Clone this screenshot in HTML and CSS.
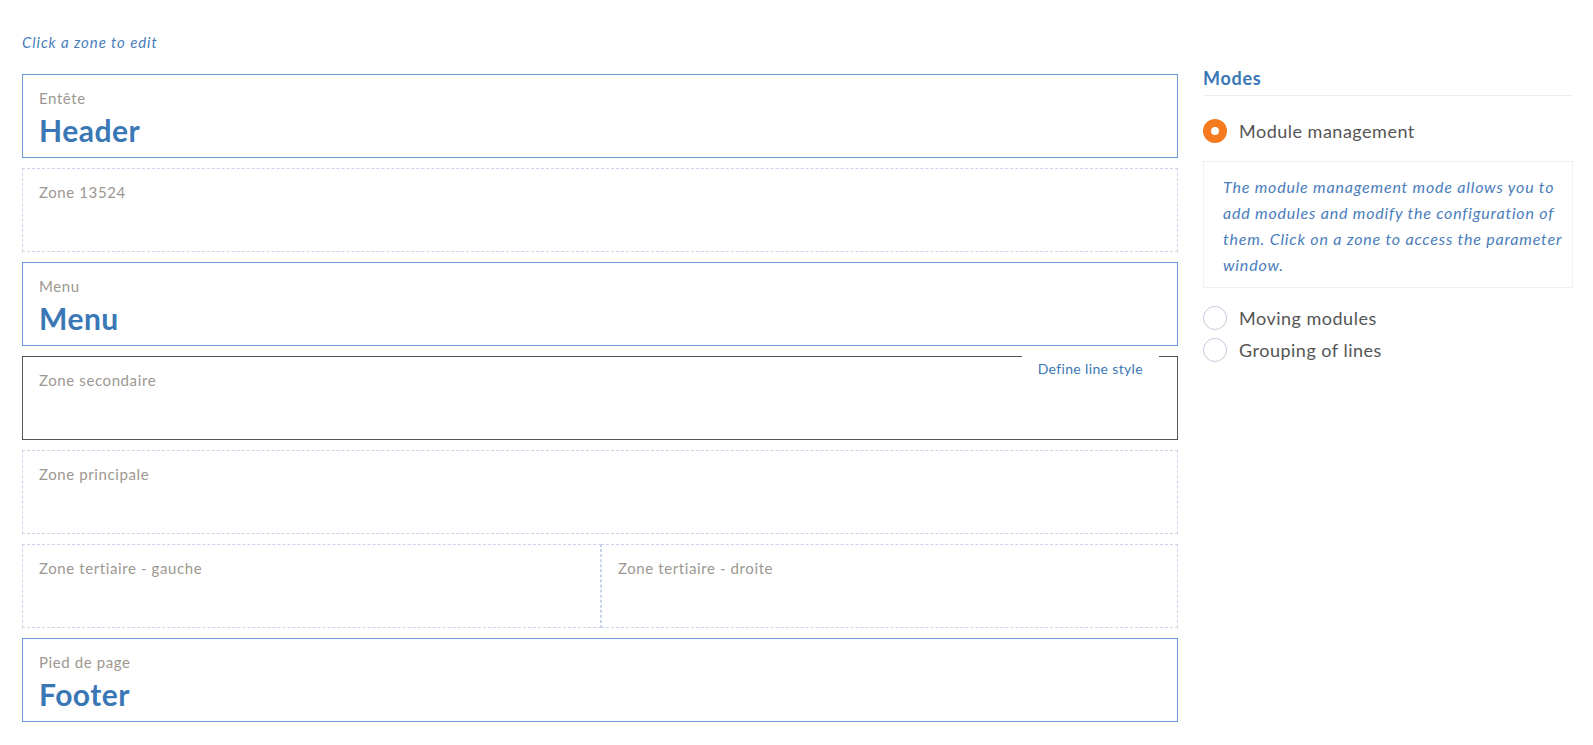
FILE: index.html
```html
<!DOCTYPE html>
<html lang="en">
<head>
  <meta charset="UTF-8" />
  <meta name="viewport" content="width=device-width, initial-scale=1.0" />
  <title>Zones</title>
  <link rel="stylesheet" href="styles.css">
</head>
<body>
  <div class="page">
    <div class="zones-col">
      <p class="hint">Click a zone to edit</p>

      <div class="zone zone-fixed">
        <span class="zone-label">Entête</span>
        <span class="zone-title">Header</span>
      </div>

      <div class="zone zone-free">
        <span class="zone-label">Zone 13524</span>
      </div>

      <div class="zone zone-fixed">
        <span class="zone-label">Menu</span>
        <span class="zone-title">Menu</span>
      </div>

      <div class="zone zone-active">
        <span class="zone-label">Zone secondaire</span>
        <a class="line-style" href="#">Define line style</a>
      </div>

      <div class="zone zone-free">
        <span class="zone-label">Zone principale</span>
      </div>

      <div class="zone-row">
        <div class="zone zone-free">
          <span class="zone-label">Zone tertiaire - gauche</span>
        </div>
        <div class="zone zone-free">
          <span class="zone-label">Zone tertiaire - droite</span>
        </div>
      </div>

      <div class="zone zone-fixed">
        <span class="zone-label">Pied de page</span>
        <span class="zone-title">Footer</span>
      </div>
    </div>

    <aside class="modes">
      <h3 class="modes-title">Modes</h3>

      <label class="mode checked">
        <span class="radio"></span>
        Module management
      </label>
      <div class="mode-info">
        The module management mode allows you to add modules and modify the configuration of them. Click on a zone to access the parameter window.
      </div>

      <label class="mode">
        <span class="radio"></span>
        Moving modules
      </label>
      <label class="mode">
        <span class="radio"></span>
        Grouping of lines
      </label>
    </aside>
  </div>
</body>
</html>
```

FILE: styles.css
```css
body {
  margin: 0;
  background: #fff;
  font-family: Lato, 'Noto Sans', sans-serif;
  color: #555;
}

.page {
  display: grid;
  grid-template-columns: 1156px 370px;
  gap: 25px;
  padding: 32px 20px 0 22px;
  align-items: start;
}

.hint {
  margin: 0 0 22px 0;
  font-size: 15px;
  line-height: 20px;
  letter-spacing: 0.9px;
  font-style: italic;
  color: #4a7dbb;
}

.zone {
  position: relative;
  box-sizing: border-box;
  height: 84px;
  padding: 13px 16px;
  margin-bottom: 10px;
  display: flex;
  flex-direction: column;
}

.zone-fixed {
  border: 1px solid #6a9fd3;
}

.zone-free {
  border: 1px dashed #c9d4e8;
}

.zone-active {
  border: 1px solid #555;
}

.zone-label {
  font-size: 15px;
  line-height: 21px;
  letter-spacing: 0.6px;
  color: #9d9791;
}

.zone-title {
  margin-top: 3px;
  font-size: 30px;
  line-height: 36px;
  letter-spacing: 0.5px;
  font-weight: 700;
  color: #3a77b5;
}

.zone-row {
  display: grid;
  grid-template-columns: 579px 1fr;
}

.line-style {
  position: absolute;
  top: -1px;
  right: 18px;
  background: #fff;
  padding: 2px 16px;
  font-size: 14px;
  line-height: 22px;
  letter-spacing: 0.35px;
  color: #3a77b5;
  text-decoration: none;
}

.modes {
  padding-top: 36px;
}

.modes-title {
  margin: 0;
  padding-bottom: 7px;
  border-bottom: 1px solid #e8eff7;
  font-size: 18px;
  line-height: 20px;
  letter-spacing: 0.7px;
  font-weight: 700;
  color: #3a77b5;
}

.mode {
  display: flex;
  align-items: center;
  gap: 12px;
  height: 24px;
  font-size: 18px;
  letter-spacing: 0.5px;
  color: #555;
  cursor: pointer;
}

.modes-title + .mode {
  margin-top: 23px;
}

.mode + .mode {
  margin-top: 8px;
}

.radio {
  box-sizing: border-box;
  flex: none;
  width: 24px;
  height: 24px;
  border-radius: 50%;
  border: 1px solid #c3cbd9;
  background: #fff;
  position: relative;
}

.mode.checked .radio {
  border: none;
  background: #f57b1e;
}

.mode.checked .radio::after {
  content: '';
  position: absolute;
  top: 8px;
  left: 8px;
  width: 8px;
  height: 8px;
  border-radius: 50%;
  background: #fff;
}

.mode-info {
  margin: 18px 0 18px 0;
  border: 1px solid #eef1f8;
  padding: 12px 5px 9px 19px;
  font-size: 16px;
  line-height: 26px;
  letter-spacing: 0.8px;
  font-style: italic;
  color: #4a7dbb;
}
```
